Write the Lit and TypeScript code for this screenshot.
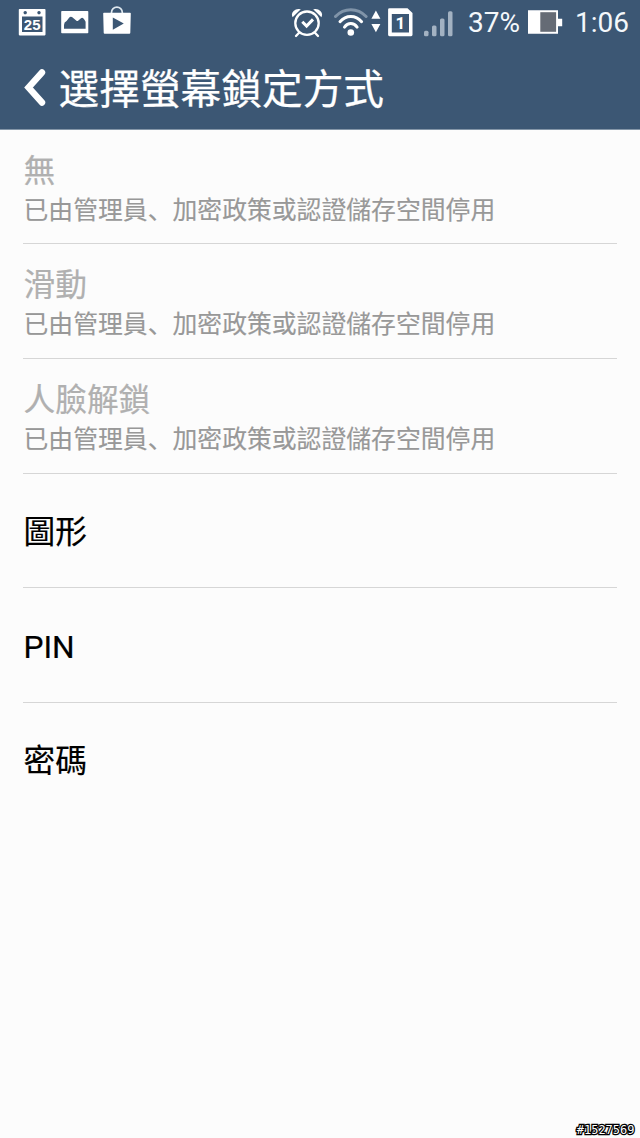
import { LitElement, html, css, svg } from "lit";
import { customElement, property } from "lit/decorators.js";

const DISABLED_NOTE = "已由管理員、加密政策或認證儲存空間停用";

interface LockOption {
  title: string;
  note?: string;
}

const OPTIONS: LockOption[] = [
  { title: "無", note: DISABLED_NOTE },
  { title: "滑動", note: DISABLED_NOTE },
  { title: "人臉解鎖", note: DISABLED_NOTE },
  { title: "圖形" },
  { title: "PIN" },
  { title: "密碼" },
];

// Icons share one coordinate space: the 46px high strip of the status bar.
const icon = (x: number, width: number, body: unknown) => html`
  <svg width=${width} height="46" viewBox="${x} 0 ${width} 46">${body}</svg>
`;

@customElement("status-bar")
class StatusBar extends LitElement {
  static styles = css`
    :host {
      display: flex;
      justify-content: space-between;
      height: 46px;
      color: #f4f8fb;
      font: 28px/46px Roboto, sans-serif;
    }
    svg {
      display: block;
      flex: none;
    }
    .left,
    .right {
      display: flex;
    }
    .left {
      padding-left: 18px;
      gap: 14px;
    }
    .right {
      padding-right: 10px;
    }
    .wifi {
      margin-left: 10px;
    }
    .sim {
      margin-left: 6px;
    }
    .signal {
      margin-left: 10px;
    }
    .percent {
      width: 53px;
      margin: 0 6px 0 14px;
    }
    .clock {
      width: 55px;
      margin-left: 12px;
    }
    .percent,
    .clock {
      white-space: nowrap;
    }
    .day {
      font: bold 15px "Liberation Sans", sans-serif;
      fill: #fff;
    }
    .slot {
      font: bold 17px Roboto, sans-serif;
      fill: #fff;
    }
  `;

  render() {
    return html`
      <div class="left">
        ${icon(18, 28, svg`
          <path fill="#fff" fill-rule="evenodd" d="M19.600 9h25q.9 0 .9.700V34.600q0 .8-.8.8H19.600q-.8 0-.8-.8V9.700q0-.7.8-.7zM22 16.500v15.500h20.500V16.500zM25.200 10.900a1.700 1.700 0 1 0 .01 0zM39 10.900a1.700 1.700 0 1 0 .01 0z"/>
          <text class="day" x="32.200" y="29.600" text-anchor="middle">25</text>
        `)}
        ${icon(60, 29, svg`
          <path fill="#fff" fill-rule="evenodd" d="M62 11h25.500q.8 0 .8.8v20.700q0 .8-.8.8H62q-.8 0-.8-.8V11.800q0-.8.8-.8zM64 28.700h21.600v-6.900q-2.600-5.300-4.600-3.600l-2.900 2.600q-1 .6-1.900-.4l-4.200-3.300q-1.600-1-2.900.6l-2.500 3.200q-2.600 1-2.600 4z"/>
        `)}
        ${icon(103, 29, svg`
          <path fill="none" stroke="#dfe8ef" stroke-width="1.700" d="M111.500 13.500v-1a5.400 5.400 0 0 1 10.800 0v1"/>
          <path fill="#fff" fill-rule="evenodd" d="M104 12.700h26q.9 0 .8.9l-.5 19.200q0 1-1 1h-24.600q-1 0-1-1l-.5-19.200q-.1-.9.800-.9zM112.800 17.600v12.200l11-6.200z"/>
        `)}
      </div>
      <div class="right">
        ${icon(291, 33, svg`
          <g fill="none" stroke="#fff" stroke-width="2.300" stroke-linecap="round">
            <circle cx="307" cy="23.200" r="11.700"/>
            <path d="M299.300 32.500l-3.300 3.500M314.700 32.500l3.300 3.500"/>
            <path stroke-width="3" d="M302.300 21.700l4.300 4.300 6.400-6.600" stroke-linecap="butt"/>
          </g>
          <path fill="#fff" d="M292.600 17.200q-1.800-3.800 1-6.300 2.800-2.600 7.200-1.600zM321.400 17.200q1.800-3.800-1-6.300-2.800-2.600-7.200-1.600z"/>
        `)}
        <span class="wifi">${icon(334, 48, svg`
          <g fill="none" stroke="#fff" stroke-width="3" stroke-linecap="round">
            <path stroke="#8094a9" d="M335.500 16.500q6.500-6.800 15.300-6.800t15.300 6.800"/>
            <path d="M340 21.700q4.500-5.300 10.800-5.300t10.800 5.300"/>
            <path d="M344.500 27.100q2.600-3.600 6.300-3.600t6.300 3.600"/>
          </g>
          <circle cx="350.800" cy="32.500" r="3.300" fill="#fff"/>
          <path fill="#fff" d="M371.400 18.800l4.500-8.200 4.500 8.200zM371.400 24l4.500 8.200 4.500-8.200z"/>
        `)}</span>
        <span class="sim">${icon(388, 25, svg`
          <path fill="#fff" fill-rule="evenodd" d="M389.500 8.200h18l5 4.800v21.800q0 1.400-1.400 1.400h-21.600q-1.400 0-1.400-1.400V9.600q0-1.400 1.400-1.400zM391.800 14v18.500h17.200V14z"/>
          <text class="slot" x="400.300" y="29.200" text-anchor="middle">1</text>
        `)}</span>
        <span class="signal">${icon(423, 31, svg`
          <g fill="#a3b2c2">
            <rect x="424" y="30.800" width="4.500" height="5.400" rx="1.500"/>
            <rect x="432" y="25.500" width="4.500" height="10.700" rx="1.500"/>
            <rect x="440" y="18.600" width="4.500" height="17.600" rx="1.500"/>
            <rect x="448" y="11.300" width="4.500" height="24.900" rx="1.500"/>
          </g>
        `)}</span>
        <span class="percent">37%</span>
        ${icon(527, 36, svg`
          <path fill="#fff" d="M528 10.200h30v8.600h4.200v7.400H558v7.600h-30z"/>
          <path fill="#656b75" d="M540.300 12.200h15.800v19.600h-15.800z"/>
        `)}
        <span class="clock">1:06</span>
      </div>
    `;
  }
}

@customElement("title-bar")
class TitleBar extends LitElement {
  @property() heading = "";

  static styles = css`
    :host {
      display: flex;
      align-items: center;
      box-sizing: border-box;
      height: 83px;
      padding: 0 0 2px 21.500px;
      color: #fff;
    }
    svg {
      flex: none;
    }
    .heading {
      margin: 0 0 0 11px;
      font: 400 40.700px/60px "Noto Sans CJK SC", sans-serif;
      -webkit-text-stroke: 0.250px #fff;
      white-space: nowrap;
    }
  `;

  render() {
    return html`
      <svg width="26" height="40" viewBox="0 0 26 40">
        <path d="M20 5.500L6.500 20.500L20 35.500" fill="none" stroke="#fff" stroke-width="6.400" stroke-linecap="round" stroke-linejoin="miter"/>
      </svg>
      <h1 class="heading">${this.heading}</h1>
    `;
  }
}

@customElement("option-row")
class OptionRow extends LitElement {
  @property() heading = "";
  @property() note = "";

  static styles = css`
    :host {
      display: flex;
      flex-direction: column;
      justify-content: center;
      box-sizing: border-box;
      height: 114.600px;
      margin: 0 23px;
      padding: 5.200px 0 0 0.500px;
      border-bottom: 1px solid #d6d6d6;
      font-family: Roboto, "Noto Sans CJK SC", sans-serif;
      white-space: nowrap;
    }
    :host(:last-of-type) {
      border-bottom-color: transparent;
    }
    .title {
      font-size: 31.700px;
      line-height: 42px;
      color: #000;
      -webkit-text-stroke: 0.200px #000;
    }
    .title.off {
      padding-top: 1px;
      color: #b0b0b0;
      -webkit-text-stroke: 0.200px #b0b0b0;
    }
    .note {
      font-size: 24.830px;
      line-height: 36px;
      color: #989898;
      -webkit-text-stroke: 0.150px #989898;
    }
  `;

  render() {
    return html`
      <div class="title ${this.note ? "off" : ""}">${this.heading}</div>
      ${this.note ? html`<div class="note">${this.note}</div>` : null}
    `;
  }
}

@customElement("app-root")
class AppRoot extends LitElement {
  static styles = css`
    :host {
      display: flex;
      flex-direction: column;
      position: relative;
      box-sizing: border-box;
      width: 640px;
      height: 1138px;
      overflow: hidden;
      background: #fcfcfc;
    }
    .header {
      box-sizing: border-box;
      height: 129.800px;
      background: #3c5774;
      border-bottom: 1px solid #8496a8;
    }
    .tag {
      position: absolute;
      right: 5.500px;
      bottom: 1px;
      font: 12px/14px "DejaVu Sans Mono", monospace;
      color: #fff;
      paint-order: stroke fill;
      -webkit-text-stroke: 2.500px #000;
    }
  `;

  render() {
    return html`
      <header class="header">
        <status-bar></status-bar>
        <title-bar heading="選擇螢幕鎖定方式"></title-bar>
      </header>
      <main>
        ${OPTIONS.map(
          (o) => html`<option-row .heading=${o.title} .note=${o.note ?? ""}></option-row>`
        )}
      </main>
      <div class="tag">#1527569</div>
    `;
  }
}
